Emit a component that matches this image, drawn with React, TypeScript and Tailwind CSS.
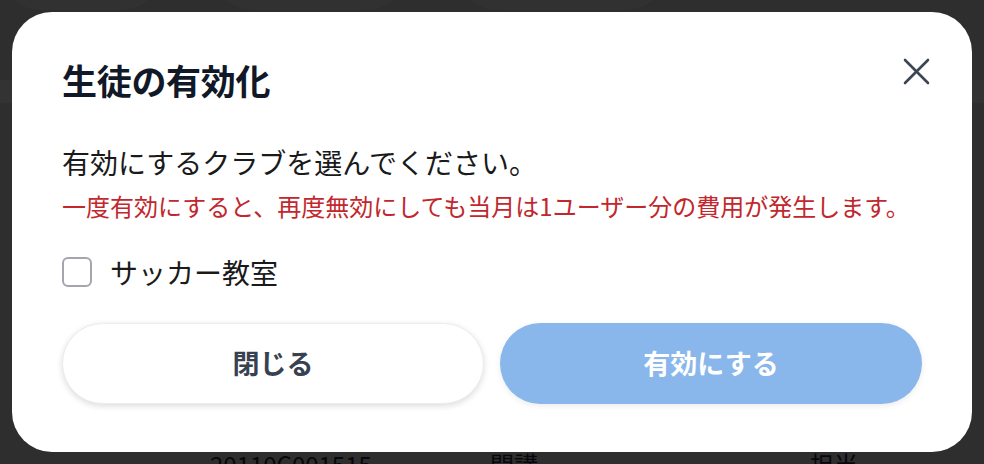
import { useState } from 'react';

const font = { fontFamily: '"Noto Sans CJK JP", "Noto Sans", sans-serif' };

function CloseIcon() {
  return (
    <svg width="27" height="27" viewBox="0 0 27 27" fill="none" stroke="#3b4554" strokeWidth="2.6" strokeLinecap="round">
      <path d="M2 2 25 25" />
      <path d="M25 2 2 25" />
    </svg>
  );
}

export default function App() {
  const [checked, setChecked] = useState(false);

  return (
    <div className="relative h-[464px] w-full overflow-hidden bg-[#2e2e2e]" style={font}>
      {/* Page behind the overlay */}
      <div className="flex h-full flex-col">
        <div className="flex gap-[50px] -mt-[60px]">
          <div className="h-[70px] w-[162px] rounded-b-[40px] bg-[#313131]" />
          <div className="h-[70px] w-[195px] rounded-b-[40px] bg-[#313131]" />
          <div className="h-[70px] w-[210px] rounded-b-[40px] bg-[#313131]" />
        </div>
        <div className="mt-[70px] h-[23px] w-full bg-[#333333]" />
        <div className="mt-auto flex translate-y-[12px] items-start pl-[210px] text-[24px] leading-[24px] text-[#07070b]">
          <span className="w-[280px]">20110C001515</span>
          <span className="w-[320px]">開講</span>
          <span>担当</span>
        </div>
      </div>

      {/* Modal */}
      <div className="absolute left-[12px] top-[12px] flex h-[440px] w-[960px] flex-col rounded-[40px] bg-white px-[50px] pt-[46px]">
        <div className="flex items-start justify-between">
          <h2 className="text-[35px] font-bold leading-[44px] tracking-[-0.3px] text-[#111827]">生徒の有効化</h2>
          <button className="-mr-[8px] flex h-[27px] w-[27px] items-center justify-center">
            <CloseIcon />
          </button>
        </div>

        <p className="mt-[40px] text-[28px] leading-[40px] text-[#1a1a1a]">有効にするクラブを選んでください。</p>
        <p className="mt-[8px] text-[24px] leading-[32px] text-[#c1272d]">
          一度有効にすると、再度無効にしても当月は1ユーザー分の費用が発生します。
        </p>

        <label className="mt-[30px] flex h-[40px] cursor-pointer items-center gap-[18px]">
          <span
            onClick={() => setChecked(!checked)}
            className="h-[30px] w-[30px] rounded-[6px] border-2 border-[#a3a6ad] bg-white"
          />
          <span className="text-[28px] leading-[40px] text-[#1a1a1a]">サッカー教室</span>
        </label>

        <div className="mt-[31px] grid grid-cols-2 gap-[16px]">
          <button className="flex h-[81px] items-center justify-center rounded-full border border-[#ececec] bg-white text-[27px] font-bold text-[#374151] shadow-[0_2px_6px_rgba(0,0,0,0.14)]">
            閉じる
          </button>
          <button className="flex h-[81px] items-center justify-center rounded-full bg-[#8ab7eb] text-[27px] font-bold text-white shadow-[0_2px_6px_rgba(0,0,0,0.08)]">
            有効にする
          </button>
        </div>
      </div>
    </div>
  );
}
